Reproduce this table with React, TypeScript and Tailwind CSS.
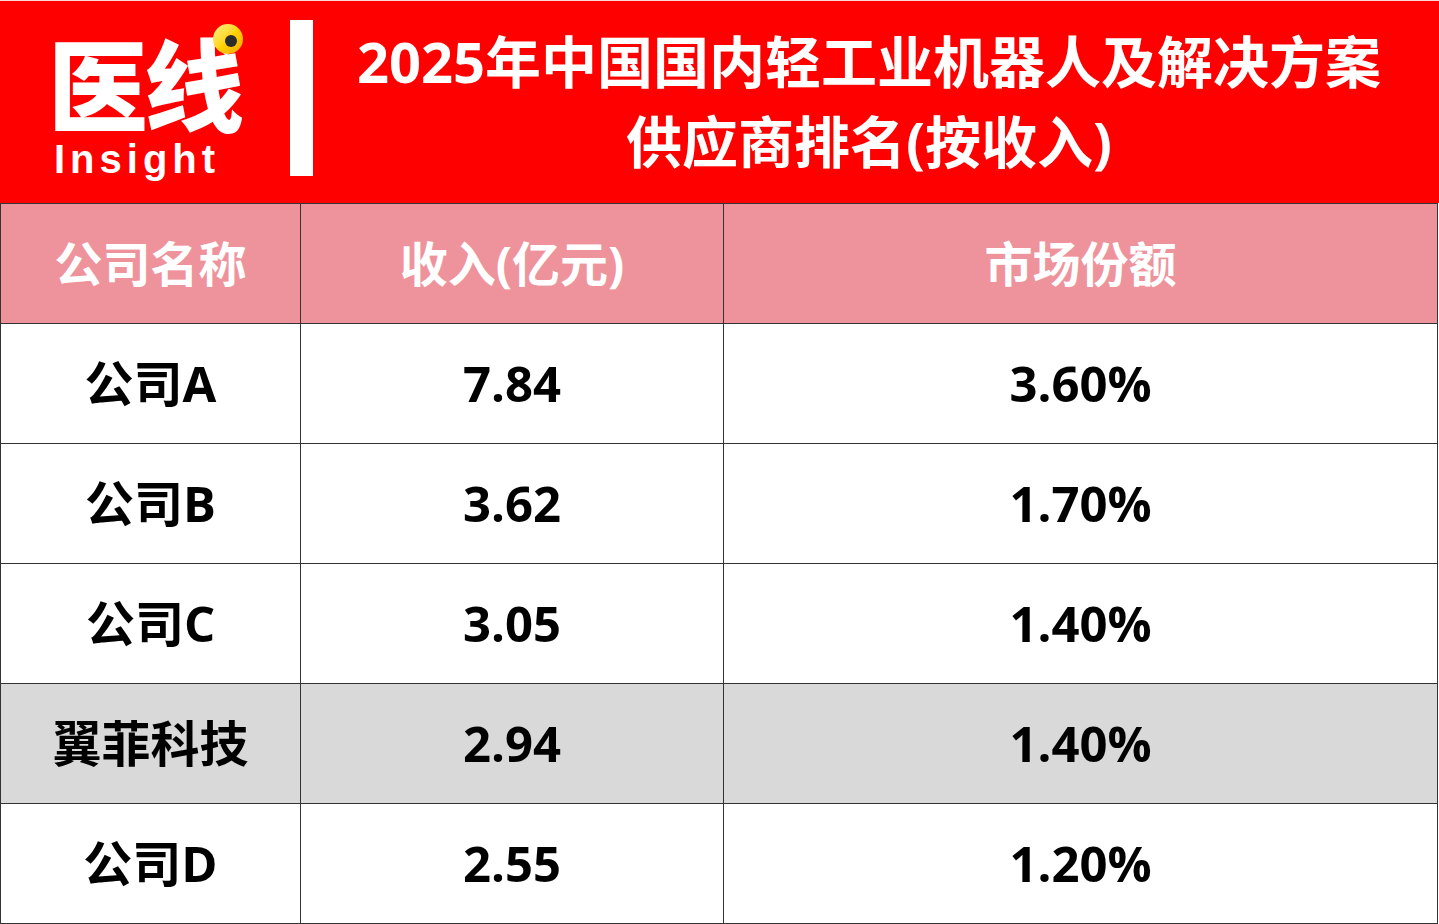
import React from 'react';

const rows = [
  { name: '公司A', revenue: '7.84', share: '3.60%', highlight: false },
  { name: '公司B', revenue: '3.62', share: '1.70%', highlight: false },
  { name: '公司C', revenue: '3.05', share: '1.40%', highlight: false },
  { name: '翼菲科技', revenue: '2.94', share: '1.40%', highlight: true },
  { name: '公司D', revenue: '2.55', share: '1.20%', highlight: false },
];

const font = { fontFamily: "'Open Sans', 'Noto Sans CJK SC', sans-serif" };

function Logo() {
  return (
    <div className="relative w-[290px] h-full pl-[48px] pt-[30px]">
      <div
        className="text-[100px] leading-none font-black text-white tracking-[-4px]"
        style={{ fontFamily: "'Noto Sans CJK SC', sans-serif" }}
      >
        医线
      </div>
      <div
        className="mt-[8px] ml-[6px] text-[40px] leading-none font-bold text-white tracking-[5px]"
        style={{ fontFamily: "'Liberation Sans', sans-serif" }}
      >
        Insight
      </div>
      {/* yellow eye on the logo */}
      <span className="absolute left-[213px] top-[23px] w-[30px] h-[30px] rounded-full bg-gradient-to-br from-[#fff27a] via-[#ffd400] to-[#f5a300] flex items-center justify-center">
        <span className="w-[12px] h-[12px] rounded-full bg-[#2b2b2b] ml-[6px] mt-[4px]" />
      </span>
    </div>
  );
}

export default function App() {
  return (
    <div className="w-[1439px] h-[924px] bg-white overflow-hidden" style={font}>
      {/* Header */}
      <div className="h-[203px] bg-[#ff0000] border-t border-[#ffd6d6] flex">
        <Logo />
        <div className="w-[23px] h-[156px] mt-[19px] bg-white" />
        <div className="flex-1 flex flex-col items-center justify-center pb-[2px] pr-[14px]">
          <div className="text-[56px] leading-[80px] font-bold text-white whitespace-nowrap">
            2025年中国国内轻工业机器人及解决方案
          </div>
          <div className="text-[56px] leading-[80px] font-bold text-white whitespace-nowrap">
            供应商排名(按收入)
          </div>
        </div>
      </div>

      {/* Table */}
      <div className="grid grid-cols-[300px_423px_714px] border-l border-t border-[#333333] w-max">
        {['公司名称', '收入(亿元)', '市场份额'].map((h) => (
          <div
            key={h}
            className="h-[120px] bg-[#ee939b] border-r border-b border-[#333333] flex items-center justify-center text-[48px] font-bold text-white"
          >
            {h}
          </div>
        ))}
        {rows.map((r) =>
          [r.name, r.revenue, r.share].map((v, i) => (
            <div
              key={r.name + i}
              className={`h-[120px] border-r border-b border-[#333333] flex items-center justify-center text-[49px] font-bold text-black ${
                r.highlight ? 'bg-[#d9d9d9]' : 'bg-white'
              }`}
            >
              {v}
            </div>
          ))
        )}
      </div>
    </div>
  );
}
